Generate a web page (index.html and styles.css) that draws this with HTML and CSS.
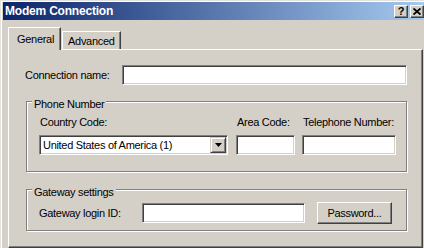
FILE: index.html
```html
<!DOCTYPE html>
<html lang="en">
  <head>
    <meta charset="UTF-8" />
    <meta name="viewport" content="width=device-width, initial-scale=1.0" />
    <title>Modem Connection</title>
    <link rel="stylesheet" href="styles.css">
  </head>
  <body>
    <div class="window">
      <div class="titlebar">
        <span class="title">Modem Connection</span>
        <div class="caption-btns">
          <span class="cap-btn">?</span>
          <span class="cap-btn">
            <svg width="8" height="7" viewBox="0 0 8 7"><path d="M0.5 0.5 L7.5 6.5 M7.5 0.5 L0.5 6.5" stroke="#000" stroke-width="1.8" fill="none"/></svg>
          </span>
        </div>
      </div>
      <div class="client">
        <div class="tabs">
          <div class="tab active">General</div>
          <div class="tab">Advanced</div>
        </div>
        <div class="panel">
          <div class="row">
            <label class="lbl conn-lbl">Connection name:</label>
            <input class="field conn-field" type="text">
          </div>

          <fieldset class="group phone">
            <legend>Phone Number</legend>
            <div class="phone-cols">
              <div class="col country">
                <label class="lbl">Country Code:</label>
                <div class="field combo">
                  <span class="combo-text">United States of America (1)</span>
                  <span class="drop">
                    <svg width="7" height="4" viewBox="0 0 7 4"><path d="M0 0 H7 L3.5 4 Z" fill="#000"/></svg>
                  </span>
                </div>
              </div>
              <div class="col area">
                <label class="lbl">Area Code:</label>
                <input class="field" type="text">
              </div>
              <div class="col tel">
                <label class="lbl">Telephone Number:</label>
                <input class="field" type="text">
              </div>
            </div>
          </fieldset>

          <fieldset class="group gateway">
            <legend>Gateway settings</legend>
            <div class="row">
              <label class="lbl gw-lbl">Gateway login ID:</label>
              <input class="field gw-field" type="text">
              <button class="btn">Password...</button>
            </div>
          </fieldset>
        </div>
      </div>
    </div>
  </body>
</html>
```

FILE: styles.css
```css
body {
  margin: 0;
  background: #d4d0c8;
  font-family: "Liberation Sans", Arial, sans-serif;
  font-size: 11px;
  letter-spacing: -0.3px;
  color: #000;
}

.window {
  height: 248px;
  box-sizing: border-box;
  padding: 2px 0 0 3px;
  display: flex;
  flex-direction: column;
  box-shadow: inset 1px 1px 0 #e4e2dc, inset 2px 2px 0 #fff;
}

.titlebar {
  height: 18px;
  display: flex;
  justify-content: space-between;
  align-items: flex-start;
  background: linear-gradient(to right, #0a246a, #a6caf0);
  color: #fff;
}

.title {
  font-weight: bold;
  font-size: 12px;
  line-height: 18px;
  padding-left: 2px;
  letter-spacing: -0.2px;
}

.caption-btns {
  display: flex;
  gap: 2px;
  margin-top: 3px;
}

.cap-btn {
  width: 14px;
  height: 13px;
  box-sizing: border-box;
  background: #d4d0c8;
  border: 1px solid;
  border-color: #fff #404040 #404040 #fff;
  box-shadow: inset -1px -1px 0 #808080;
  color: #000;
  font-weight: bold;
  font-size: 11px;
  line-height: 11px;
  display: flex;
  align-items: center;
  justify-content: center;
  letter-spacing: 0;
}

.client {
  flex: 1;
  display: flex;
  flex-direction: column;
  padding: 7px 1px 0 5px;
}

.tabs {
  display: flex;
  align-items: flex-end;
  height: 22px;
  position: relative;
  z-index: 1;
}

.tab {
  border: 1px solid;
  border-color: #fff #404040 transparent #fff;
  border-bottom: 0;
  box-shadow: inset -1px 0 0 #808080;
  padding: 3px 5px 1px 5px;
  margin-left: 1px;
  line-height: 13px;
  background: #d4d0c8;
}

.tab.active {
  padding: 5px 6px 4px 8px;
  margin: 0 0 -1px 0;
}

.panel {
  flex: 1;
  border: 1px solid;
  border-color: #fff #404040 #404040 #fff;
  box-shadow: inset -1px -1px 0 #808080;
  padding: 15px 15px 0 16px;
}

.row {
  display: flex;
  align-items: center;
}

.lbl {
  line-height: 13px;
}

.conn-lbl {
  width: 97px;
}

.field {
  box-sizing: border-box;
  height: 20px;
  margin: 0;
  padding: 0;
  background: #fff;
  border: 1px solid;
  border-color: #808080 #fff #fff #808080;
  box-shadow: inset 1px 1px 0 #404040, inset -1px -1px 0 #d4d0c8;
  font: inherit;
  outline: none;
}

.conn-field {
  flex: 1;
}

.group {
  margin: 7px 0 0 1px;
  padding: 5px 8px 16px 12px;
  border: 1px solid #808080;
  box-shadow: inset 1px 1px 0 #fff, 1px 1px 0 #fff;
  min-width: 0;
}

.group legend {
  padding: 6px 2px 0;
  margin-left: -7px;
  line-height: 13px;
  background: #d4d0c8;
}

.phone-cols {
  display: flex;
}

.col {
  display: flex;
  flex-direction: column;
  gap: 6px;
}

.col .lbl {
  padding-left: 1px;
}

.country {
  width: 189px;
  margin-right: 8px;
}

.area {
  width: 59px;
  margin-right: 7px;
}

.tel {
  width: 94px;
}

.combo {
  display: flex;
  align-items: center;
  padding-left: 3px;
}

.drop {
  margin-left: auto;
  margin-right: 1px;
  width: 16px;
  height: 16px;
  box-sizing: border-box;
  background: #d4d0c8;
  border: 1px solid;
  border-color: #d4d0c8 #404040 #404040 #d4d0c8;
  box-shadow: inset 1px 1px 0 #fff, inset -1px -1px 0 #808080;
  display: flex;
  align-items: center;
  justify-content: center;
}

.gateway {
  margin-top: 8px;
  padding: 3px 8px 6px 12px;
}

.gw-lbl {
  width: 103px;
}

.gw-field {
  width: 163px;
}

.btn {
  margin-left: 12px;
  width: 75px;
  height: 22px;
  padding: 0;
  background: #d4d0c8;
  border: 1px solid;
  border-color: #fff #404040 #404040 #fff;
  box-shadow: inset -1px -1px 0 #808080;
  font: inherit;
  letter-spacing: inherit;
  color: #000;
}
```
